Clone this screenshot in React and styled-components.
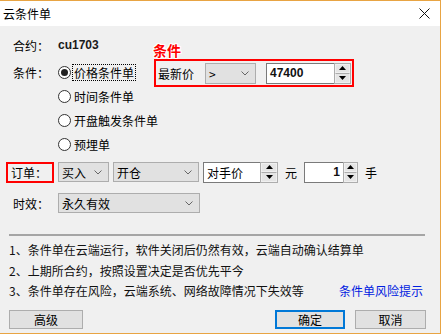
import React from 'react'
import styled, { createGlobalStyle } from 'styled-components'

const Global = createGlobalStyle`
  html, body { margin: 0; padding: 0; background: #fff; }
  body {
    font-family: "Noto Sans CJK SC", "Microsoft YaHei", sans-serif;
    font-size: 12px;
    color: #000;
  }
`

const Window = styled.div`
  width: 441px;
  height: 334px;
  box-sizing: border-box;
  border: 1px solid #e8a443;
  border-left: none;
  background: #f0f0f0;
  display: flex;
  flex-direction: column;
`

const TitleBar = styled.div`
  height: 25px;
  flex-shrink: 0;
  background: #fff;
  display: flex;
  align-items: center;
  justify-content: space-between;
  padding: 0 10px 0 3px;
`

const Title = styled.span`
  font-size: 12px;
  line-height: 25px;
`

const Body = styled.div`
  flex: 1;
  display: flex;
  flex-direction: column;
  padding: 7px 0 0 9px;
`

const Row = styled.div`
  display: flex;
  align-items: center;
  height: 24px;
  margin-top: ${p => p.mt || 0}px;
`

const Label = styled.div`
  width: ${p => (p.boxed ? 48 : 49)}px;
  height: ${p => (p.boxed ? 27 : 'auto')};
  box-sizing: border-box;
  flex-shrink: 0;
  display: flex;
  align-items: center;
  padding-left: ${p => (p.boxed ? 3 : 4)}px;
  margin-left: ${p => (p.boxed ? -3 : 0)}px;
  margin-right: ${p => (p.boxed ? 4 : 0)}px;
  border: ${p => (p.boxed ? '2px solid #f00' : 'none')};
`

const Contract = styled.span`
  font-family: "Liberation Sans", Arial, sans-serif;
  font-weight: bold;
  font-size: 12px;
  color: #1a1a1a;
`

const CondRow = styled.div`
  display: flex;
  align-items: flex-start;
  margin-top: 3px;
`

const RadioList = styled.div`
  width: 96px;
  flex-shrink: 0;
  display: flex;
  flex-direction: column;
`

const RadioItem = styled.div`
  height: 24px;
  display: flex;
  align-items: center;
  gap: 2px;
  white-space: nowrap;
`

const Circle = styled.span`
  width: 13px;
  height: 13px;
  box-sizing: border-box;
  border: 1px solid #333;
  border-radius: 50%;
  background: #fff;
  display: flex;
  align-items: center;
  justify-content: center;
  flex-shrink: 0;
  &::after {
    content: '';
    display: ${p => (p.checked ? 'block' : 'none')};
    width: 7px;
    height: 7px;
    border-radius: 50%;
    background: #222;
  }
`

const RadioText = styled.span`
  padding: 0 1px;
  line-height: 15px;
  outline: ${p => (p.focus ? '1px dotted #000' : 'none')};
`

const CondBox = styled.div`
  position: relative;
  margin-top: -1px;
  width: 200px;
  height: 28px;
  box-sizing: border-box;
  border: 2px solid #f00;
  display: flex;
  align-items: center;
  padding-left: 2px;
`

const Tag = styled.span`
  position: absolute;
  left: -3px;
  top: -19px;
  font-size: 14px;
  font-weight: bold;
  color: #f00;
  line-height: 16px;
  text-shadow: 1px 0 0 #fff, -1px 0 0 #fff, 0 1px 0 #fff, 0 -1px 0 #fff,
    1px 1px 0 #fff, -1px -1px 0 #fff, 1px -1px 0 #fff, -1px 1px 0 #fff;
`

const SelectBox = styled.div`
  width: ${p => p.w}px;
  height: ${p => p.h || 20}px;
  box-sizing: border-box;
  flex-shrink: 0;
  background: #e1e1e1;
  border: 1px solid #adadad;
  display: flex;
  align-items: center;
  justify-content: space-between;
  padding: 0 6px 0 3px;
  margin-left: ${p => p.ml || 0}px;
`

const SpinWrap = styled.div`
  display: flex;
  flex-shrink: 0;
  height: ${p => p.h || 21}px;
  margin-left: ${p => p.ml || 0}px;
`

const SpinField = styled.div`
  width: ${p => p.w}px;
  box-sizing: border-box;
  background: #fff;
  border: 1px solid #7a7a7a;
  border-right: none;
  display: flex;
  align-items: center;
  justify-content: ${p => (p.right ? 'flex-end' : 'flex-start')};
  padding: 0 3px 0 3px;
  font-family: ${p => (p.bold ? '"Liberation Sans", Arial, sans-serif' : 'inherit')};
  font-weight: ${p => (p.bold ? 'bold' : 'normal')};
  color: ${p => (p.bold ? '#111' : '#000')};
`

const SpinButtons = styled.div`
  width: ${p => p.w || 17}px;
  box-sizing: border-box;
  border: 1px solid #adadad;
  display: flex;
  flex-direction: column;
  background: #f0f0f0;
`

const SpinBtn = styled.div`
  flex: 1;
  display: flex;
  align-items: center;
  justify-content: center;
  background: #e5e5e5;
  border: 1px solid #f0f0f0;
  & + & { border-top: 1px solid #adadad; }
`

const Unit = styled.span`
  margin-left: ${p => p.ml || 0}px;
`

const Divider = styled.div`
  width: 416px;
  height: 2px;
  background: #a5a5a5;
  margin-top: 19px;
`

const Notes = styled.div`
  width: 414px;
  margin-top: 4px;
  line-height: 20.5px;
  color: #111;
`

const NoteLine = styled.div`
  display: flex;
  justify-content: space-between;
  white-space: nowrap;
`

const Link = styled.span`
  color: #0020e0;
`

const Footer = styled.div`
  width: 417px;
  display: flex;
  margin-top: 8px;
`

const Button = styled.div`
  width: ${p => p.w}px;
  height: 19px;
  box-sizing: border-box;
  background: #e1e1e1;
  border: ${p => (p.primary ? '2px solid #0078d7' : '1px solid #adadad')};
  display: flex;
  align-items: center;
  justify-content: center;
  margin-left: ${p => p.ml || 0};
`

const Chevron = () => (
  <svg width="8" height="5" viewBox="0 0 8 5">
    <polyline points="0.5,0.5 4,4 7.5,0.5" fill="none" stroke="#666" strokeWidth="1" />
  </svg>
)

const Arrow = ({ up }) => (
  <svg width="7" height="4" viewBox="0 0 7 4">
    <polygon points={up ? '0,4 7,4 3.5,0' : '0,0 7,0 3.5,4'} fill="#000" />
  </svg>
)

const Select = ({ w, h, ml, children }) => (
  <SelectBox w={w} h={h} ml={ml}>
    <span>{children}</span>
    <Chevron />
  </SelectBox>
)

const Spin = ({ w, sw, ml, h, bold, right, children }) => (
  <SpinWrap ml={ml} h={h}>
    <SpinField w={w} bold={bold} right={right}>{children}</SpinField>
    <SpinButtons w={sw}>
      <SpinBtn><Arrow up /></SpinBtn>
      <SpinBtn><Arrow /></SpinBtn>
    </SpinButtons>
  </SpinWrap>
)

const Radio = ({ checked, focus, children }) => (
  <RadioItem>
    <Circle checked={checked} />
    <RadioText focus={focus}>{children}</RadioText>
  </RadioItem>
)

export default function App() {
  return (
    <>
      <Global />
      <Window>
        <TitleBar>
          <Title>云条件单</Title>
          <svg width="11" height="11" viewBox="0 0 11 11">
            <path d="M0.5 0.5 L10.5 10.5 M10.5 0.5 L0.5 10.5" stroke="#111" strokeWidth="1" />
          </svg>
        </TitleBar>
        <Body>
          <Row>
            <Label>合约：</Label>
            <Contract>cu1703</Contract>
          </Row>
          <CondRow>
            <Label style={{ height: 24 }}>条件：</Label>
            <RadioList>
              <Radio checked focus>价格条件单</Radio>
              <Radio>时间条件单</Radio>
              <Radio>开盘触发条件单</Radio>
              <Radio>预埋单</Radio>
            </RadioList>
            <CondBox>
              <Tag>条件</Tag>
              <span>最新价</span>
              <Select w={51} h={21} ml={11}>&gt;</Select>
              <Spin w={68} sw={17} ml={10} bold>47400</Spin>
            </CondBox>
          </CondRow>
          <Row mt={4}>
            <Label boxed>订单：</Label>
            <Select w={51}>买入</Select>
            <Select w={86} ml={4}>开仓</Select>
            <Spin w={57} sw={18} ml={4}>对手价</Spin>
            <Unit ml={7}>元</Unit>
            <Spin w={39} sw={15} ml={7} bold right>1</Spin>
            <Unit ml={7}>手</Unit>
          </Row>
          <Row mt={7}>
            <Label>时效：</Label>
            <Select w={142}>永久有效</Select>
          </Row>
          <Divider />
          <Notes>
            <NoteLine>1、条件单在云端运行，软件关闭后仍然有效，云端自动确认结算单</NoteLine>
            <NoteLine>2、上期所合约，按照设置决定是否优先平今</NoteLine>
            <NoteLine>
              <span>3、条件单存在风险，云端系统、网络故障情况下失效等</span>
              <Link>条件单风险提示</Link>
            </NoteLine>
          </Notes>
          <Footer>
            <Button w={74}>高级</Button>
            <Button w={70} ml="auto" primary>确定</Button>
            <Button w={71} ml="10px">取消</Button>
          </Footer>
        </Body>
      </Window>
    </>
  )
}
